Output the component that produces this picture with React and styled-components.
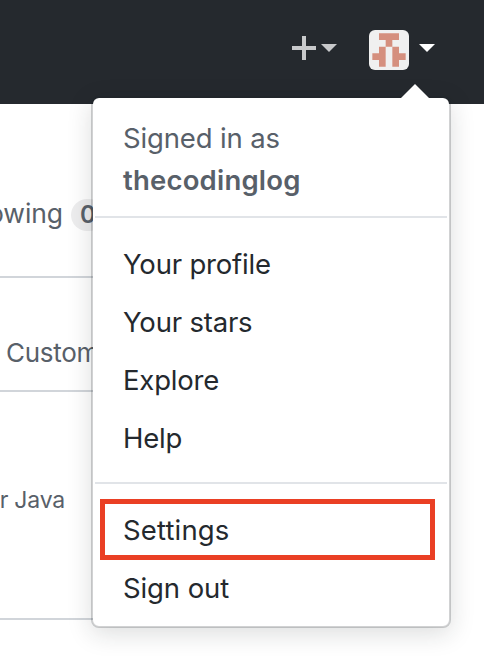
import React from "react";
import styled, { createGlobalStyle } from "styled-components";

const GlobalStyle = createGlobalStyle`
  * { box-sizing: border-box; }
  body {
    margin: 0;
    background: #fff;
    font-family: Inter, "Liberation Sans", sans-serif;
    color: #24292e;
  }
`;

const Page = styled.div`
  position: relative;
  width: 484px;
  height: 656px;
  overflow: hidden;
`;

const Header = styled.header`
  display: flex;
  align-items: center;
  height: 104px;
  padding: 0 49px 8px 292px;
  background: #25292e;
`;

const CreateButton = styled.div`
  display: flex;
  align-items: center;
  gap: 5px;
  margin-right: 32px;
  color: #c8c9cb;
`;

const AccountButton = styled.div`
  display: flex;
  align-items: center;
  gap: 10px;
  height: 40px;
  margin-top: 4px;
  color: #fff;
`;

const Caret = styled.span`
  width: 0;
  height: 0;
  border: 8px solid transparent;
  border-top-color: currentColor;
  border-bottom: 0;
  margin-top: ${(p) => p.$offset || 0}px;
`;

const Avatar = styled.svg`
  display: block;
  width: 40px;
  height: 40px;
  border-radius: 6px;
  background: #f0f0f0;
`;

const Section = styled.section`
  display: flex;
  align-items: flex-start;
  width: 300px;
  height: ${(p) => p.$height}px;
  padding-top: ${(p) => p.$top}px;
  border-bottom: 2px solid #d1d5da;
`;

const Label = styled.span`
  flex: none;
  display: flex;
  justify-content: flex-end;
  width: ${(p) => p.$width}px;
  font-size: ${(p) => p.$size}px;
  line-height: 36px;
  letter-spacing: ${(p) => p.$spacing || 0}px;
  white-space: pre;
  color: #586069;
`;

const Counter = styled.span`
  flex: none;
  height: 32px;
  margin: 4px 0 0 8px;
  padding: 0 9px;
  border-radius: 20px;
  background: rgba(27, 31, 35, 0.08);
  font-size: 24px;
  font-weight: 600;
  line-height: 32px;
  color: #586069;
`;

const Menu = styled.nav`
  position: absolute;
  top: 96px;
  left: 91px;
  width: 360px;
  height: 532px;
  padding: 19px 2px 0;
  border: 2px solid rgba(27, 31, 35, 0.2);
  border-radius: 8px;
  background: #fff;
  background-clip: padding-box;
  box-shadow: 0 6px 24px rgba(27, 31, 35, 0.15);

  &::before {
    content: "";
    position: absolute;
    top: -14px;
    right: 20px;
    border: 14px solid transparent;
    border-top: 0;
    border-bottom-color: #fff;
  }
`;

const Account = styled.div`
  padding-left: 28px;
  font-size: 27.5px;
  line-height: 42px;
  color: #586069;
`;

const Text = styled.span`
  display: block;
  letter-spacing: ${(p) => p.$spacing || 0}px;
  font-weight: ${(p) => (p.$bold ? 600 : 400)};
`;

const Divider = styled.div`
  height: 2px;
  margin: 15px 0 17px;
  background: #e1e4e8;
`;

const Item = styled.a`
  position: relative;
  display: block;
  height: 58px;
  padding-left: 28px;
  font-size: 27.5px;
  line-height: 58px;
`;

const Highlight = styled.span`
  position: absolute;
  top: -2px;
  left: 5px;
  width: 335px;
  height: 61px;
  border: 5px solid #ea3f24;
`;

const LINKS = ["Your profile", "Your stars", "Explore", "Help"];

export default function App() {
  return (
    <Page>
      <GlobalStyle />
      <Header>
        <CreateButton>
          <svg width="24" height="24" viewBox="0 0 24 24">
            <path d="M10 0h4v10h10v4H14v10h-4V14H0v-4h10z" fill="currentColor" />
          </svg>
          <Caret />
        </CreateButton>
        <AccountButton>
          <Avatar viewBox="0 0 6 6">
            <path
              d="M1.5.5h3v1h-1v1h1v1h1v1h-1v1h-1v-3h-1v3h-1v-1h-1v-1h1v-1h1v-1h-1z"
              fill="#d58f7e"
            />
          </Avatar>
          <Caret $offset={-4} />
        </AccountButton>
      </Header>
      <Section $height={174} $top={91}>
        <Label $width={63} $size={26.5} $spacing={-0.1}>owing</Label>
        <Counter>0</Counter>
      </Section>
      <Section $height={114} $top={57}>
        <Label $width={99} $size={26} $spacing={-0.3}>Custom</Label>
      </Section>
      <Section $height={228} $top={90}>
        <Label $width={65} $size={23} $spacing={-0.2}>r Java</Label>
      </Section>
      <Menu>
        <Account>
          <Text $spacing={-0.15}>Signed in as</Text>
          <Text $bold $spacing={0.2}>thecodinglog</Text>
        </Account>
        <Divider />
        {LINKS.map((label) => (
          <Item key={label}>
            <Text $spacing={-0.2}>{label}</Text>
          </Item>
        ))}
        <Divider />
        <Item>
          <Text $spacing={0.15}>Settings</Text>
          <Highlight />
        </Item>
        <Item>
          <Text $spacing={-0.1}>Sign out</Text>
        </Item>
      </Menu>
    </Page>
  );
}
